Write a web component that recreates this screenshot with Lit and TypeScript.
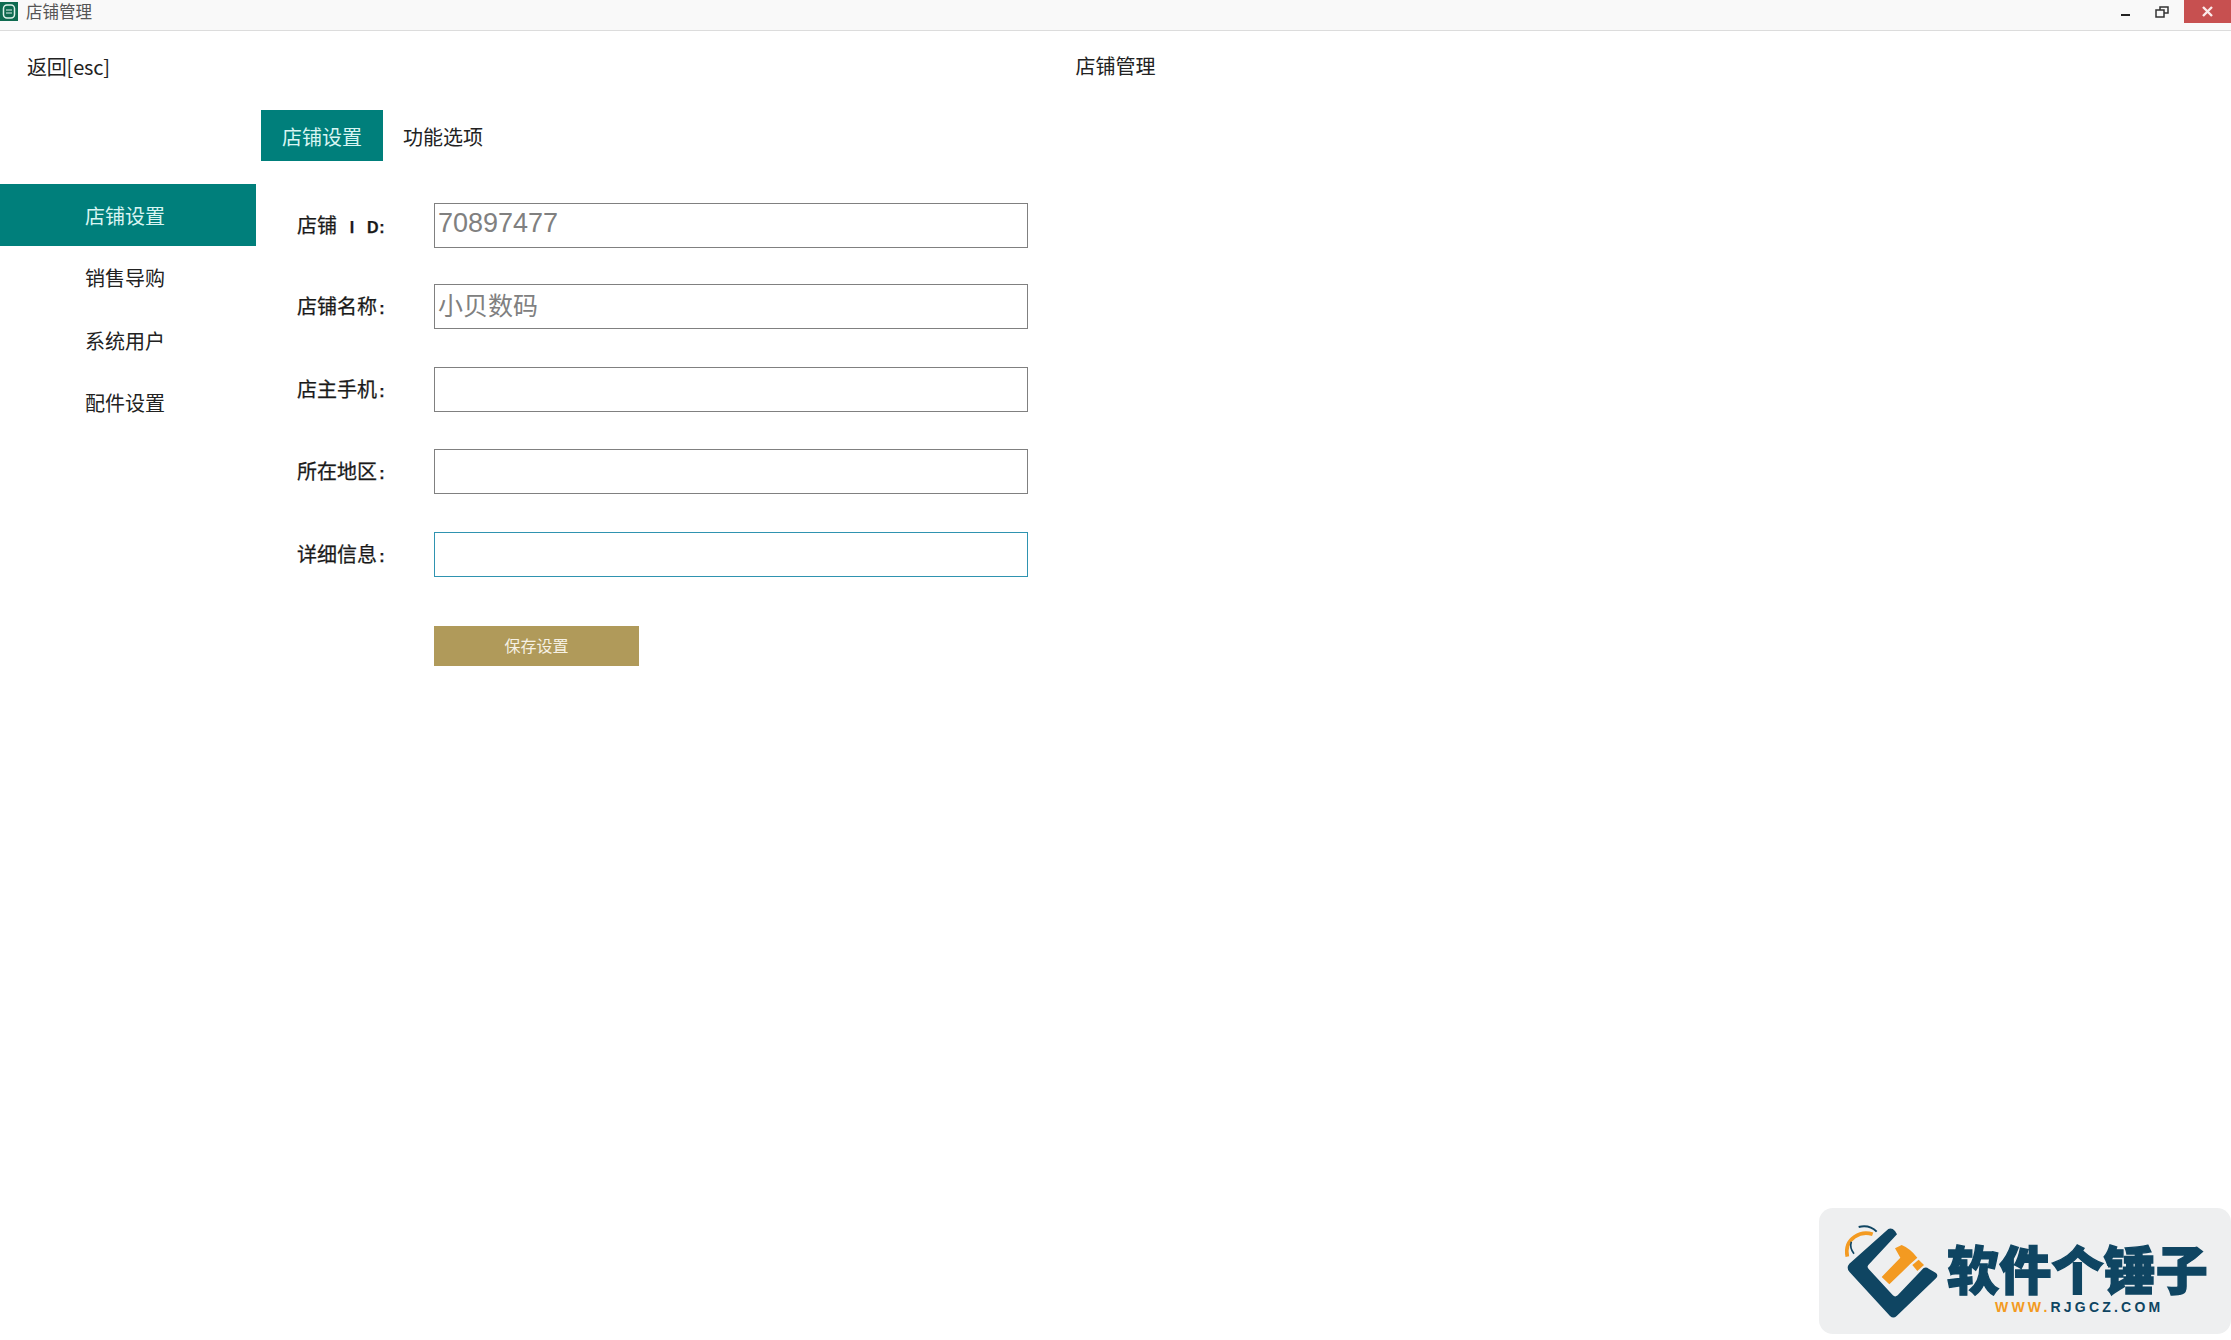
import { LitElement, html, css } from "lit";
import { customElement } from "lit/decorators.js";

@customElement("app-root")
export class AppRoot extends LitElement {
  static styles = css`
    :host {
      display: block;
      position: relative;
      width: 2231px;
      height: 1340px;
      overflow: hidden;
      background: #fff;
      font-family: "Noto Sans CJK SC", "Liberation Sans", sans-serif;
      color: #222;
      font-size: 20px;
    }
    .titlebar {
      display: flex;
      align-items: flex-start;
      height: 30px;
      border-bottom: 1px solid #dcdcdc;
      background: #f9f9f9;
    }
    .app-icon { margin-top: 2px; flex: none; display: block; }
    .title-text {
      margin-left: 8px;
      font-size: 16.5px;
      line-height: 22px;
      color: #555;
    }
    .win { margin-left: auto; display: flex; align-items: flex-start; }
    .win svg { display: block; }
    .win .min { margin-right: 25px; margin-top: 13px; }
    .win .max { margin-right: 15px; margin-top: 6px; }
    .close {
      width: 47px;
      height: 23px;
      background: #c75050;
      display: flex;
      align-items: center;
      justify-content: center;
    }
    .header {
      display: grid;
      grid-template-columns: 1fr auto 1fr;
      height: 79px;
      align-items: start;
    }
    .back { padding: 21px 0 0 27px; line-height: 30px; letter-spacing: -0.2px; }
    .center { padding-top: 20px; line-height: 30px; font-size: 20px; }
    .body { display: flex; }
    .side { width: 256px; flex: none; padding-top: 74px; }
    .side-item {
      height: 62.5px;
      line-height: 63px;
      padding-right: 6px;
      text-align: center;
      box-sizing: border-box;
    }
    .side-item.on { background: #007f7b; color: #d8f5f2; height: 62px; }
    .main { margin-left: 5px; }
    .tabs { display: flex; height: 51px; }
    .tab {
      width: 122px;
      line-height: 53px;
      text-align: center;
    }
    .tab.on { background: #007f7b; color: #d8f5f2; }
    .tab.plain { margin-left: -1px; }
    .form {
      padding: 42px 0 0 36px;
      display: flex;
      flex-direction: column;
      gap: 38px;
    }
    .row { display: flex; align-items: center; height: 44px; }
    .row.up { margin-top: -1px; }
    .row.down { margin-top: 1px; }
    .label {
      width: 137px;
      flex: none;
      padding-bottom: 2px;
      color: #1a1a1a;
      -webkit-text-stroke: 0.25px #1a1a1a;
      white-space: pre;
    }
    .c {
      display: inline-block;
      width: 10px;
      text-align: center;
      font-family: "Liberation Sans", sans-serif;
      font-size: 16px;
      font-style: normal;
      font-weight: 700;
    }
    input {
      width: 594px;
      height: 45px;
      box-sizing: border-box;
      border: 1px solid #808080;
      outline: none;
      padding: 0 3px 3px;
      margin: 0;
      background: #fff;
      color: #808080;
      font-family: "Liberation Sans", sans-serif;
      font-size: 27px;
    }
    input.cjk { font-family: "Noto Sans CJK SC", sans-serif; font-size: 25px; padding-bottom: 5px; }
    input.focus { border-color: #2f93b0; }
    .save {
      margin: 12px 0 0 137px;
      width: 205px;
      height: 40px;
      background: #b09a5a;
      color: #f6f1e4;
      font-size: 16px;
      line-height: 39px;
      text-align: center;
    }
    .brand {
      position: absolute;
      left: 1819px;
      top: 1208px;
      width: 412px;
      height: 126px;
      border-radius: 14px;
      background: #eeeff0;
    }
    .brand svg { position: absolute; left: 11px; top: 7px; }
    .brand-name {
      position: absolute;
      left: 128px;
      top: 32px;
      font-size: 52px;
      line-height: 56px;
      font-weight: 900;
      color: #0f4562;
      -webkit-text-stroke: 1.4px #0f4562;
      letter-spacing: 0.2px;
      white-space: nowrap;
    }
    .brand-url {
      position: absolute;
      left: 176px;
      top: 91px;
      font-family: "Liberation Sans", sans-serif;
      font-size: 14px;
      line-height: 16px;
      font-weight: 700;
      letter-spacing: 3.2px;
      color: #0f4562;
      white-space: nowrap;
    }
    .brand-url b { color: #f39a21; }
  `;

  render() {
    return html`
      <div class="titlebar">
        <svg class="app-icon" width="18" height="19" viewBox="0 0 18 19">
          <rect width="18" height="19" fill="#0f6b50" />
          <rect x="3.5" y="3" width="11" height="13" rx="3.5" fill="none" stroke="#dff2ea" stroke-width="1.5" />
          <path d="M6 8h6M6 11h6" stroke="#dff2ea" stroke-width="1.2" />
        </svg>
        <span class="title-text">店铺管理</span>
        <div class="win">
          <svg class="min" width="9" height="4" viewBox="0 0 9 4"><rect y="1" width="9" height="2" fill="#222" /></svg>
          <svg class="max" width="14" height="12" viewBox="0 0 14 12" fill="none" stroke="#333" stroke-width="1.5">
            <rect x="5" y="1" width="8" height="6" />
            <rect x="1" y="4" width="8" height="7" fill="#f9f9f9" />
          </svg>
          <div class="close">
            <svg width="13" height="11" viewBox="0 0 13 11"><path d="M2 1l9 9M11 1l-9 9" stroke="#fbeaea" stroke-width="2.4" /></svg>
          </div>
        </div>
      </div>
      <div class="header">
        <div class="back">返回[esc]</div>
        <div class="center">店铺管理</div>
        <div></div>
      </div>
      <div class="body">
        <div class="side">
          <div class="side-item on">店铺设置</div>
          <div class="side-item">销售导购</div>
          <div class="side-item">系统用户</div>
          <div class="side-item">配件设置</div>
        </div>
        <div class="main">
          <div class="tabs">
            <div class="tab on">店铺设置</div>
            <div class="tab plain">功能选项</div>
          </div>
          <div class="form">
            <div class="row"><span class="label">店铺<i class="c"></i><i class="c">I</i><i class="c"></i><i class="c">D</i><i class="c">:</i></span><input .value=${"70897477"} /></div>
            <div class="row up"><span class="label">店铺名称<i class="c">:</i></span><input class="cjk" .value=${"小贝数码"} /></div>
            <div class="row down"><span class="label">店主手机<i class="c">:</i></span><input /></div>
            <div class="row"><span class="label">所在地区<i class="c">:</i></span><input /></div>
            <div class="row down"><span class="label">详细信息<i class="c">:</i></span><input class="focus" /></div>
            <div class="save">保存设置</div>
          </div>
        </div>
      </div>
      <div class="brand">
        <svg width="130" height="115" viewBox="0 0 390 345">
          <path d="M175 42 Q186 38 195 48 L201 58 L115 150 Q110 156 116 162 L188 240 Q195 248 203 241 L280 160 Q288 154 296 161 L318 174 Q326 182 318 190 L200 303 Q190 312 180 303 L58 170 Q48 158 58 146 Z" fill="#0f4562" />
          <path d="M155 186 L211 128 L195 100 L215 90 Q240 100 262 128 L240 148 L178 208 Z" fill="#f39a21" />
          <path d="M247 150 L266 134 L282 150 L262 168 Z" fill="#f39a21" />
          <path d="M52 125 Q44 85 74 65 Q100 48 128 58" fill="none" stroke="#f39a21" stroke-width="11" />
          <path d="M86 36 Q118 28 140 50" fill="none" stroke="#0f4562" stroke-width="6" />
          <path d="M64 80 Q58 98 72 116" fill="none" stroke="#0f4562" stroke-width="5" />
        </svg>
        <div class="brand-name">软件个锤子</div>
        <div class="brand-url"><b>WWW.</b>RJGCZ.COM</div>
      </div>
    `;
  }
}
